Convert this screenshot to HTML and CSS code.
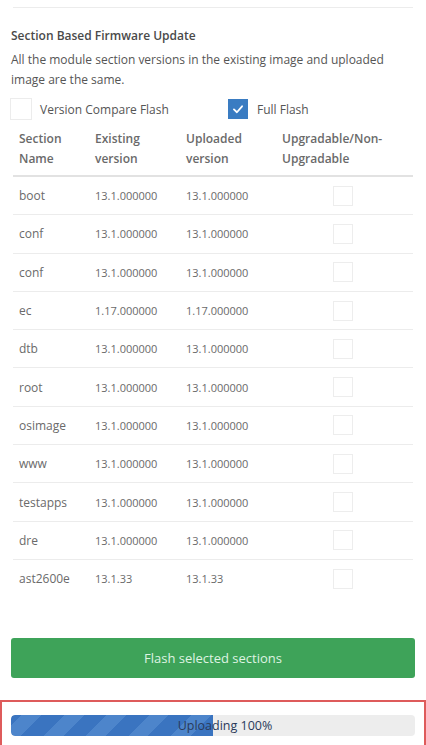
FILE: index.html
```html
<!DOCTYPE html>
<html lang="en">
<head>
<meta charset="utf-8">
<title>Section Based Firmware Update</title>
<link rel="stylesheet" href="styles.css">
</head>
<body>
<div class="page">
  <div class="topline"></div>
  <div class="title">Section Based Firmware Update</div>
  <div class="desc">All the module section versions in the existing image and uploaded image are the same.</div>
  <div class="options">
    <label class="option first"><span class="box"></span><span>Version Compare Flash</span></label>
    <label class="option"><span class="box checked"><svg viewBox="0 0 20 20" width="20" height="20"><path d="M5.5 10.5 L8.8 13.6 L14.5 7" fill="none" stroke="#fff" stroke-width="2" stroke-linecap="round" stroke-linejoin="round"/></svg></span><span>Full Flash</span></label>
  </div>
  <table class="sections">
    <thead>
      <tr><th class="c1">Section<br>Name</th><th class="c2">Existing<br>version</th><th class="c3">Uploaded<br>version</th><th class="c4">Upgradable/Non-<br>Upgradable</th></tr>
    </thead>
    <tbody>
      <tr><td>boot</td><td class="ver">13.1.000000</td><td class="ver">13.1.000000</td><td class="chk"><span class="rbox"></span></td></tr>
      <tr><td>conf</td><td class="ver">13.1.000000</td><td class="ver">13.1.000000</td><td class="chk"><span class="rbox"></span></td></tr>
      <tr><td>conf</td><td class="ver">13.1.000000</td><td class="ver">13.1.000000</td><td class="chk"><span class="rbox"></span></td></tr>
      <tr><td>ec</td><td class="ver">1.17.000000</td><td class="ver">1.17.000000</td><td class="chk"><span class="rbox"></span></td></tr>
      <tr><td>dtb</td><td class="ver">13.1.000000</td><td class="ver">13.1.000000</td><td class="chk"><span class="rbox"></span></td></tr>
      <tr><td>root</td><td class="ver">13.1.000000</td><td class="ver">13.1.000000</td><td class="chk"><span class="rbox"></span></td></tr>
      <tr><td>osimage</td><td class="ver">13.1.000000</td><td class="ver">13.1.000000</td><td class="chk"><span class="rbox"></span></td></tr>
      <tr><td>www</td><td class="ver">13.1.000000</td><td class="ver">13.1.000000</td><td class="chk"><span class="rbox"></span></td></tr>
      <tr><td>testapps</td><td class="ver">13.1.000000</td><td class="ver">13.1.000000</td><td class="chk"><span class="rbox"></span></td></tr>
      <tr><td>dre</td><td class="ver">13.1.000000</td><td class="ver">13.1.000000</td><td class="chk"><span class="rbox"></span></td></tr>
      <tr class="last"><td>ast2600e</td><td class="ver">13.1.33</td><td class="ver">13.1.33</td><td class="chk"><span class="rbox"></span></td></tr>
    </tbody>
  </table>
  <button class="flash-btn" type="button">Flash selected sections</button>
</div>
<div class="upload-box">
  <div class="progress">
    <div class="fill" style="width: 50%"></div>
    <div class="ptext">Uploading 100%</div>
  </div>
</div>
</body>
</html>
```

FILE: styles.css
```css
html, body {
  margin: 0;
  padding: 0;
  background: #ffffff;
}
body {
  font-family: "Open Sans", "Noto Sans", sans-serif;
  font-size: 12px;
  color: #555;
  overflow: hidden;
}
.page {
  padding: 0 11px;
}
.topline {
  margin: 7px 2px 0;
  border-top: 1px solid #ececec;
}
.title {
  margin-top: 18px;
  line-height: 20px;
  color: #4a4a4a;
  font-weight: 600;
  font-size: 12px;
}
.desc {
  margin-top: 4px;
  line-height: 20px;
  color: #555;
  padding-right: 20px;
}
.options {
  display: flex;
  align-items: center;
  margin-top: 8px;
  height: 22px;
  margin-left: -1px;
}
.option {
  display: flex;
  align-items: center;
  gap: 9px;
  color: #555;
}
.option.first {
  width: 218px;
  gap: 8px;
}
.box {
  width: 20px;
  height: 20px;
  border: 1px solid #ececec;
  box-sizing: border-box;
  display: flex;
  align-items: center;
  justify-content: center;
}
.option.first .box {
  width: 22px;
  height: 22px;
}
.box.checked {
  background: #3a7cc2;
  border-color: #3a7cc2;
}
.sections {
  width: calc(100% - 4px);
  margin: 3px 2px 0;
  border-collapse: collapse;
  table-layout: fixed;
}
.sections th {
  text-align: left;
  font-weight: 600;
  color: #6a6a6a;
  line-height: 20px;
  padding: 6px 6px 6px;
  border-bottom: 2px solid #e2e2e2;
  vertical-align: top;
}
.sections th.c1 { width: 64px; }
.sections th.c2 { width: 79px; }
.sections th.c3 { width: 84px; }
.sections td {
  height: 37.3px;
  padding: 0 6px;
  border-bottom: 1px solid #ececec;
  color: #6a6a6a;
  vertical-align: middle;
  white-space: nowrap;
}
.sections td.ver {
  font-size: 11px;
}
.sections tr.last td {
  border-bottom: none;
}
.sections td.chk {
  padding-left: 57px;
}
.rbox {
  display: block;
  width: 20px;
  height: 20px;
  border: 1px solid #ededed;
  box-sizing: border-box;
}
.flash-btn {
  display: block;
  width: 100%;
  height: 40px;
  margin-top: 41px;
  border: none;
  border-radius: 3px;
  background: #3ea359;
  color: #dff3e2;
  font-family: "Open Sans", "Noto Sans", sans-serif;
  font-size: 13px;
  padding: 0;
}
.upload-box {
  margin-top: 22px;
  border: 2px solid #de5b5b;
  border-bottom: none;
  padding: 13px 9px 20px;
}
.progress {
  position: relative;
  height: 21px;
  background: #ededed;
  border-radius: 4px;
  overflow: hidden;
}
.fill {
  height: 100%;
  background-color: #3a74c0;
  background-image: repeating-linear-gradient(-45deg, #3a74c0 0, #3a74c0 16px, #4d85cb 16px, #4d85cb 30px);
  border-radius: 4px 0 0 4px;
}
.ptext {
  position: absolute;
  left: 0;
  right: 0;
  top: 0;
  line-height: 21px;
  text-align: center;
  color: #2a3a5a;
  font-size: 12.5px;
  padding-left: 24px;
}
```
